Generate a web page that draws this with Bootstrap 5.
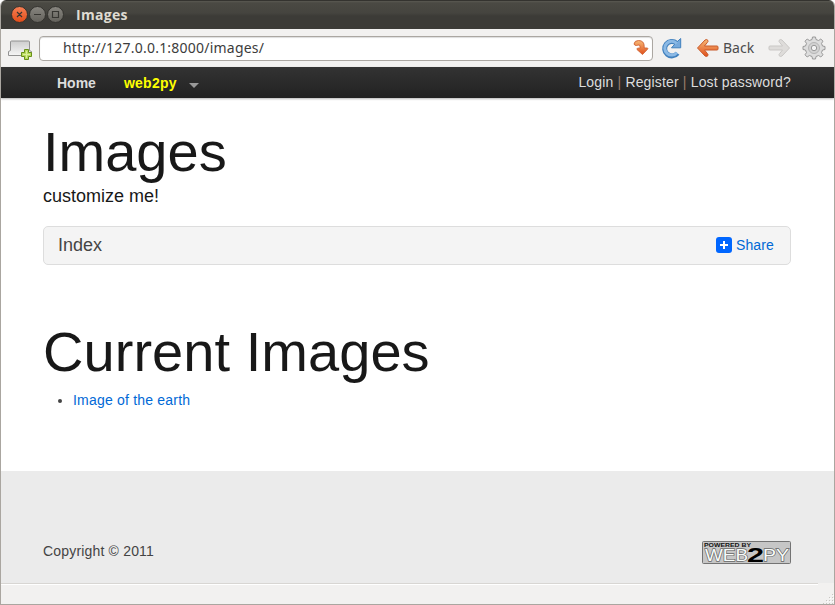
<!DOCTYPE html>
<html lang="en">
<head>
<meta charset="utf-8">
<title>Images</title>
<meta name="viewport" content="width=device-width, initial-scale=1">
<link href="https://cdn.jsdelivr.net/npm/bootstrap@5.3.0/dist/css/bootstrap.min.css" rel="stylesheet">
<style>
body{font-family:"Liberation Sans",Arial,sans-serif;font-size:14px;line-height:21px;color:#444;background:#fff;overflow:hidden}
svg{display:block;flex:none}
a{color:#0069d6;text-decoration:none}
.window{width:835px;height:605px;border:1px solid #aaa6a0;border-top:0;border-radius:6px 6px 0 0;overflow:hidden}
.titlebar{height:29px;margin:0 -1px;padding-left:11px;background:linear-gradient(#34332f 0,#34332f 1px,#5a5952 1px,#4a4943 3px,#45443f 13px,#3c3b37 16px,#3c3b37 100%);color:#dfdbd2;font:bold 14px/29px "Open Sans","Noto Sans",sans-serif}
.wm-title{margin-left:12px;letter-spacing:.3px}
.toolbar{height:38px;background:#f2f1f0;color:#4c4c4c;font-family:"Noto Sans","Open Sans",sans-serif}
.address{width:614px;height:25px;margin-left:6px;border:1px solid #aba7a2;border-radius:4px;background:#fff;box-shadow:inset 0 1px 1px #ddd;padding:0 3px 0 23px;color:#3c3c3c;line-height:22px}
.address-text{letter-spacing:.22px}
.reload{margin-left:6px}
.go-back{margin-left:11px}
.back-label{margin:-2px 0 0 3px}
.go-forward{margin-left:13px}
.gear{margin-left:11px}
.topnav{height:31px;background:linear-gradient(#333,#222);box-shadow:0 1px 2px rgba(0,0,0,.3);padding:0 43px 0 56px;color:#9a7d6a}
.topnav a{color:#ddd}
.topnav a.brand-link{color:#ff0;margin-left:28px;letter-spacing:.25px}
.menu-links{padding-top:1px}
.user-links{letter-spacing:.16px;padding-bottom:1px}
.menu-caret{border:5px solid transparent;border-top-color:#999;border-bottom:0;margin:5px 0 0 12px}
.content{height:373px;padding:24px 43px 0 42px}
.display-title{font-size:56px;line-height:60px;font-weight:400;color:#181818;margin:0}
.subtitle{font-size:18px;line-height:27px;color:#181818;font-weight:400;margin:1px 0 0}
.index-bar{height:39px;margin-top:16px;border:1px solid #ddd;border-radius:5px;background:#f4f4f4;padding:0 16px 1px 14px}
.index-label{font-size:18px}
.share{letter-spacing:.15px}
.current{margin-top:57px;letter-spacing:.05px}
.image-list{padding-left:30px;margin:8px 0 0;letter-spacing:.2px}
.page-footer{height:112px;background:#ebebeb;padding:70px 43px 0 42px;letter-spacing:.18px}
.web2py-logo{letter-spacing:0}
.logo-word{fill:#f7fbf9;stroke:#666;stroke-width:1.3px;paint-order:stroke}
.statusbar{height:22px;background:#f2f1f0}
.status-line{height:2px;width:817px;border-top:1px solid #d8d6d3;background:#fff}
</style>
<script src="https://cdn.jsdelivr.net/npm/bootstrap@5.3.0/dist/js/bootstrap.bundle.min.js"></script>
</head>
<body>
<div class="window d-flex flex-column">
<header class="titlebar d-flex align-items-center flex-shrink-0">
<svg width="53" height="20" viewBox="0 0 53 20">
<defs><linearGradient id="close" x2="0" y2="1"><stop stop-color="#f78055"/><stop offset="1" stop-color="#e24c18"/></linearGradient><linearGradient id="ctl" x2="0" y2="1"><stop stop-color="#888680"/><stop offset="1" stop-color="#63615b"/></linearGradient></defs>
<g stroke="#33322e"><circle cx="8.500" cy="9.500" r="8" fill="url(#close)"/><circle cx="26.500" cy="9.500" r="8" fill="url(#ctl)"/><circle cx="44.500" cy="9.500" r="8" fill="url(#ctl)"/></g>
<g fill="none" stroke="#373632" stroke-width="1.200"><path d="m6 7 5 5m0-5-5 5M23 9.500h7M41.500 6.500h6v6h-6z"/></g>
</svg>
<span class="wm-title">Images</span>
</header>
<div class="toolbar d-flex align-items-center flex-shrink-0">
<svg class="ms-1" width="28" height="28" viewBox="5 34 28 28">
<defs><linearGradient id="tab" x2="0" y2="1"><stop stop-color="#cdcdcd"/><stop offset="1" stop-color="#f6f6f6"/></linearGradient></defs>
<path d="M8.500 55.500v-4l2-1V42q0-1 1-1h17q1 0 1 1v8.500l2 1v4z" fill="url(#tab)" stroke="#929292"/>
<path d="M24.500 49.500h4v3h3v4h-3v3h-4v-3h-3v-4h3z" fill="#b9db5c" stroke="#689018" stroke-linejoin="round"/><path d="M26.500 51v7M23 54.500h7" stroke="#dcef9d"/>
</svg>
<div class="address d-flex align-items-center justify-content-between">
<span class="address-text">http://127.0.0.1:8000/images/</span>
<svg width="16" height="18" viewBox="0 0 16 18"><defs><linearGradient id="org" x2="0" y2="1"><stop stop-color="#f7b875"/><stop offset="1" stop-color="#e0501c"/></linearGradient></defs><path d="M1 5Q1.500 1.500 5.500 1.500q5.700 0 5.700 6V9h3.300q.6.500 0 1.200L9.500 15.500 4 10.500q-.2-1 .5-1.300l2.700-.2V8Q7 5.500 5 6q-.8.500-1.500.5Q1.500 6.500 1 5z" fill="url(#org)" stroke="#cf6132" stroke-width=".9" stroke-linejoin="round"/></svg>
</div>
<svg width="26" height="26" viewBox="0 0 26 26" class="reload"><path d="M18.500 18.200A7.200 7.200 0 1 1 17.500 8.200" fill="none" stroke="#4180bd" stroke-width="5"/><path d="M21.700 3.500v9.300h-9.200l2.800-3.100 3.200-3.300z" fill="#75a9dc" stroke="#4180bd" stroke-linejoin="round"/><path d="M18 17.600A6.900 6.900 0 1 1 17.800 8.600" fill="none" stroke="#8bb9e5" stroke-width="3"/></svg>
<svg width="24" height="22" viewBox="0 0 24 22" class="go-back"><path d="M1.500 11 9 3q1.800-1.200 3 .5.300 1-.5 1.800L8.500 9H21q1 0 1 1v2q0 1-1 1H8.500l3 3.700q.8.800.5 1.800-1.200 1.700-3 .5z" fill="url(#org)" stroke="#c85b2b" stroke-linejoin="round"/></svg>
<span class="back-label">Back</span>
<svg width="24" height="22" viewBox="0 0 24 22" class="go-forward"><path d="M22.500 11 15 3q-1.800-1.200-3 .5-.3 1 .5 1.800L15.500 9H3q-1 0-1 1v2q0 1 1 1h12.500l-3 3.700q-.8.800-.5 1.800 1.200 1.700 3 .5z" fill="#dedcda" stroke="#c9c7c5" stroke-linejoin="round"/></svg>
<svg width="24" height="24" viewBox="-12 -12 24 24" class="gear"><g fill="#ddd" stroke="#999"><path d="M-2-8.500-1.500-11h3L2-8.500 4.600-7.500 6.800-9 9-6.800 7.500-4.600 8.500-2 11-1.500v3L8.500 2 7.500 4.600 9 6.800 6.800 9 4.600 7.500 2 8.500 1.500 11h-3L-2 8.500-4.600 7.500-6.800 9-9 6.800-7.500 4.600-8.500 2-11 1.500v-3L-8.500-2-7.500-4.600-9-6.800-6.800-9-4.600-7.500z"/><circle r="5.500" fill="#d2d2d2" stroke="#b5b5b5"/><circle r="2.700" fill="#f3f3f3"/></g></svg>
</div>
<nav class="topnav d-flex justify-content-between align-items-center flex-shrink-0">
<div class="menu-links d-flex align-items-center fw-bold"><a href="#">Home</a><a href="#" class="brand-link">web2py</a><span class="menu-caret"></span></div>
<div class="user-links"><a href="#">Login</a> | <a href="#">Register</a> | <a href="#">Lost password?</a></div>
</nav>
<main class="content flex-shrink-0">
<h1 class="display-title">Images</h1>
<h5 class="subtitle">customize me!</h5>
<div class="index-bar d-flex align-items-center justify-content-between"><span class="index-label">Index</span>
<a href="#" class="share d-flex align-items-center gap-1"><svg width="16" height="16" viewBox="0 0 16 16"><rect width="16" height="16" rx="3" fill="#06f"/><path d="M8 4v8M4 8h8" stroke="#fff" stroke-width="2"/></svg>Share</a></div>
<h1 class="display-title current">Current Images</h1>
<ul class="image-list"><li><a href="#">Image of the earth</a></li></ul>
</main>
<footer class="page-footer d-flex justify-content-between align-items-start flex-shrink-0"><span>Copyright © 2011</span>
<svg class="web2py-logo" width="89" height="23" viewBox="0 0 89 23"><rect x=".5" y=".5" width="88" height="22" rx="1" fill="#c6c6c6" stroke="#737373"/>
<g font-family="Liberation Sans,sans-serif"><text x="2" y="6" font-size="6" font-weight="bold" textLength="47" lengthAdjust="spacingAndGlyphs" fill="#111">POWERED BY</text>
<g font-size="17" class="logo-word"><text x="3" y="20" textLength="43" lengthAdjust="spacingAndGlyphs">WEB</text><text x="61" y="20" textLength="26" lengthAdjust="spacingAndGlyphs">PY</text></g>
<text x="45" y="20.500" font-size="20" font-weight="bold" textLength="17" lengthAdjust="spacingAndGlyphs" fill="#000">2</text></g></svg>
</footer>
<div class="statusbar d-flex flex-column justify-content-between flex-shrink-0"><div class="status-line"></div>
<svg class="ms-auto" width="12" height="12" viewBox="0 0 12 12"><path d="M10 1.500h1M7 4.500h1m2 0h1M4 7.500h1m2 0h1m2 0h1M1 10.500h1m2 0h1m2 0h1m2 0h1" stroke="#c9c6c2"/><path d="M11 2.500h1M8 5.500h1m2 0h1M5 8.500h1m2 0h1m2 0h1M2 11.500h1m2 0h1m2 0h1m2 0h1" stroke="#fff"/></svg></div>
</div>
</body>
</html>
